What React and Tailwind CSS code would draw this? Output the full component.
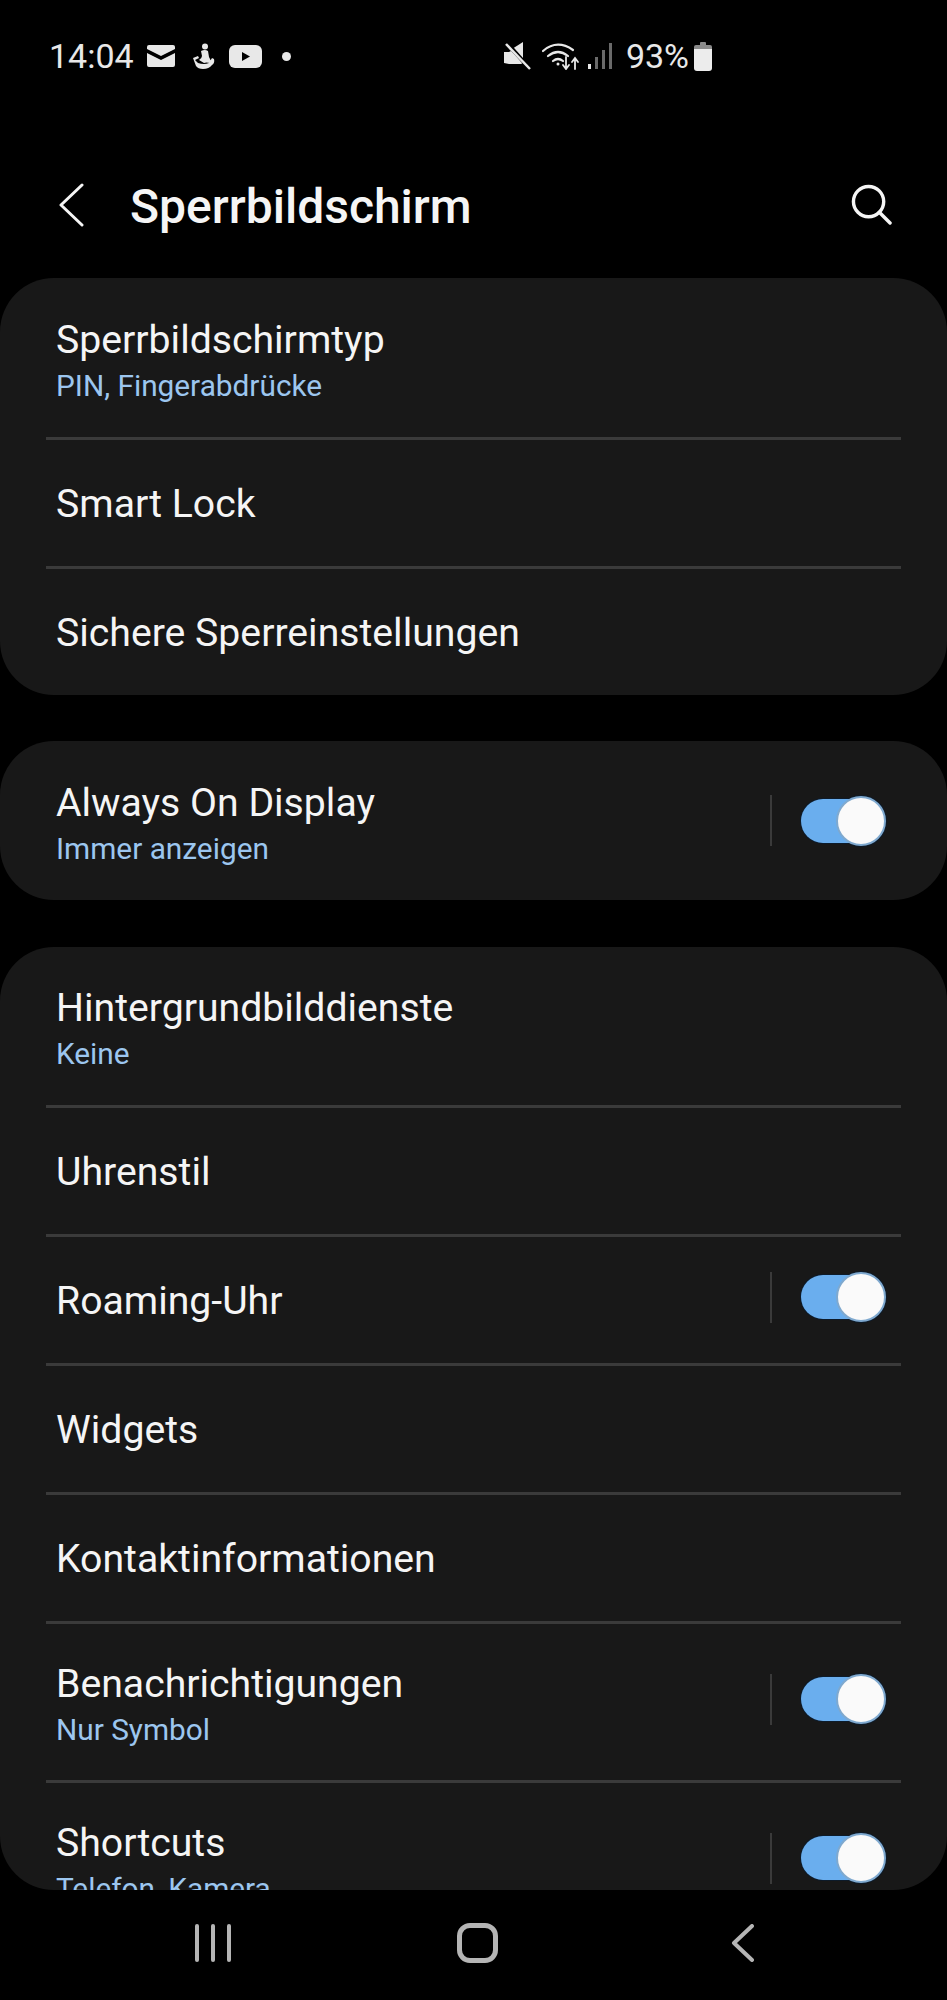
import React from 'react';

const Mail = () => (
  <svg width="28" height="22" viewBox="0 0 28 22">
    <path d="M0 2q0-2 2-2h24q2 0 2 2v2L14 11 0 4z" fill="#e8e8e8" />
    <path d="M0 8l14 7 14-7v12q0 2-2 2H2q-2 0-2-2z" fill="#e8e8e8" />
  </svg>
);

const Figure = () => (
  <svg width="24" height="26" viewBox="0 0 24 26" fill="#e8e8e8">
    <circle cx="13" cy="3.5" r="3" />
    <path d="M9 8q4-2 7 0l1 6q1 3 3 4l-2 2q-4-1-6 0l-5-3q3-2 3-4z" />
    <path d="M1 15l5-2 1 2-4 2 3 3q6 2 11 0l3-5 2 1q1 4-2 6-3 4-9 4-5 0-7-3z" />
  </svg>
);

const Youtube = () => (
  <svg width="33" height="23" viewBox="0 0 33 23">
    <rect width="33" height="23" rx="6" fill="#e8e8e8" />
    <path d="M13 7l8 4.500-8 4.500z" fill="#000" />
  </svg>
);

const Mute = () => (
  <svg width="27" height="28" viewBox="0 0 27 28">
    <path d="M0 10h5l2-1 12 12-2 1H5l-5-1z" fill="#e8e8e8" />
    <path d="M8 7l11-7v19z" fill="#e8e8e8" />
    <path d="M3 1l23 26" stroke="#000" strokeWidth="4" />
    <path d="M2 2l24 25" stroke="#e8e8e8" strokeWidth="2.500" />
  </svg>
);

const Wifi = () => (
  <svg width="37" height="28" viewBox="0 0 37 28" fill="none" stroke="#e8e8e8" strokeWidth="2.200" strokeLinecap="round">
    <path d="M1 9Q15-3 31 8" />
    <path d="M6 14q10-8 20 0" />
    <path d="M11 19q5-4 10 0" />
    <circle cx="16" cy="22" r="1.500" fill="#e8e8e8" stroke="none" />
    <path d="M24 15v11m-3-3l3 4 3-4" strokeWidth="1.800" />
    <path d="M33 27V17m-3 3l3-4 3 4" strokeWidth="1.800" />
  </svg>
);

const Signal = () => (
  <svg width="24" height="26" viewBox="0 0 24 26">
    <rect x="0" y="21" width="3" height="5" fill="#e8e8e8" />
    <rect x="7" y="14" width="3" height="12" fill="#6a6a6a" />
    <rect x="14" y="7" width="3" height="19" fill="#6a6a6a" />
    <rect x="21" y="0" width="3" height="26" fill="#6a6a6a" />
  </svg>
);

const Battery = () => (
  <svg width="18" height="29" viewBox="0 0 18 29">
    <path d="M6 1q0-1 1-1h4q1 0 1 1v2H6z" fill="#8a8a8a" />
    <rect y="3" width="18" height="7" rx="2" fill="#8a8a8a" />
    <path d="M0 7h18v19q0 3-3 3H3q-3 0-3-3z" fill="#ececec" />
  </svg>
);

const Toggle = ({ raised }) => (
  <div className={`flex items-center ml-auto ${raised ? 'mb-[6px]' : ''}`}>
    <div className="w-[2px] h-[51px] bg-[#3a3a3a]" />
    <div className="relative w-[84px] h-[44px] ml-[29px]">
      {/* dark halo sits behind the track and thumb */}
      <div className="absolute top-[-4px] right-[-2px] w-[52px] h-[52px] rounded-full bg-[#0d1b2a]" />
      <div className="absolute inset-0 rounded-full bg-[#6aaeee] shadow-[0_0_0_1px_#0d1b2a]" />
      <div className="absolute top-[-3px] right-[-1px] w-[50px] h-[50px] rounded-full bg-[#fafafa] border-2 border-[#7fa9cf]" />
    </div>
  </div>
);

const Row = ({ title, sub, toggle, raised = true, height }) => (
  <div className={`flex items-center pl-[56px] pr-[62px] ${height}`}>
    <div className={`flex flex-col ${sub ? 'pt-[3px]' : 'pt-[2px]'}`}>
      <span className="text-[39.200px] leading-[50px] text-[#f5f5f5]">{title}</span>
      {sub && <span className="text-[29.800px] leading-[36px] text-[#9cc6ef] mt-[3px]">{sub}</span>}
    </div>
    {toggle && <Toggle raised={raised} />}
  </div>
);

const Divider = () => <div className="h-[3px] mx-[46px] bg-[#3a3a3a]" />;

export default function App() {
  return (
    <div className="w-[947px] h-[2000px] flex flex-col bg-black overflow-hidden font-['Roboto',sans-serif]">
      {/* status bar */}
      <div className="flex items-center h-[112px] pl-[49px] pr-[235px] justify-between">
        <div className="flex items-center">
          <span className="text-[34px] text-[#e8e8e8] leading-none">14:04</span>
          <div className="flex items-center ml-[13px] gap-[17px]">
            <Mail />
            <Figure />
            <div className="ml-[-4px]"><Youtube /></div>
            <div className="w-[9px] h-[9px] ml-[3px] rounded-full bg-[#e8e8e8]" />
          </div>
        </div>
        <div className="flex items-center">
          <Mute />
          <div className="ml-[11px]"><Wifi /></div>
          <div className="ml-[9px]"><Signal /></div>
          <span className="ml-[14px] text-[34px] text-[#e8e8e8] leading-none">93%</span>
          <div className="ml-[5px]"><Battery /></div>
        </div>
      </div>

      {/* header */}
      <div className="flex items-center h-[166px] pt-[20px] pl-[59px] pr-[55px]">
        <svg width="25" height="44" viewBox="0 0 25 44" fill="none" stroke="#f5f5f5" strokeWidth="3" strokeLinecap="round" strokeLinejoin="round">
          <path d="M23 2L2 22l21 20" />
        </svg>
        <span className="ml-[46px] mt-[3px] text-[48px] leading-[56px] font-medium text-[#f5f5f5]">Sperrbildschirm</span>
        <svg className="ml-auto mb-[2px]" width="41" height="41" viewBox="0 0 42 42" fill="none" stroke="#f5f5f5" strokeWidth="3.500" strokeLinecap="round">
          <circle cx="18" cy="18" r="15.500" />
          <path d="M29 29l11 11" />
        </svg>
      </div>

      {/* Sperrbildschirmtyp */}
      <div className="rounded-[54px] bg-[#181818]">
        <Row title="Sperrbildschirmtyp" sub="PIN, Fingerabdrücke" height="h-[159px]" />
        <Divider />
        <Row title="Smart Lock" height="h-[126px]" />
        <Divider />
        <Row title="Sichere Sperreinstellungen" height="h-[126px]" />
      </div>

      <div className="mt-[46px] rounded-[54px] bg-[#181818]">
        <Row title="Always On Display" sub="Immer anzeigen" toggle raised={false} height="h-[159px]" />
      </div>

      <div className="mt-[47px] h-[943px] overflow-hidden rounded-[54px] bg-[#181818]">
        <Row title="Hintergrundbilddienste" sub="Keine" height="h-[158px]" />
        <Divider />
        <Row title="Uhrenstil" height="h-[126px]" />
        <Divider />
        <Row title="Roaming-Uhr" toggle height="h-[126px]" />
        <Divider />
        <Row title="Widgets" height="h-[126px]" />
        <Divider />
        <Row title="Kontaktinformationen" height="h-[126px]" />
        <Divider />
        <Row title="Benachrichtigungen" sub="Nur Symbol" toggle height="h-[156px]" />
        <Divider />
        <Row title="Shortcuts" sub="Telefon, Kamera" toggle height="h-[156px]" />
      </div>

      {/* navigation bar */}
      <div className="flex items-center flex-1 pl-[195px] pb-[4px]">
        <div className="flex gap-[12px]">
          <div className="w-[4px] h-[38px] rounded-full bg-[#b5b5b5]" />
          <div className="w-[4px] h-[38px] rounded-full bg-[#b5b5b5]" />
          <div className="w-[4px] h-[38px] rounded-full bg-[#b5b5b5]" />
        </div>
        <div className="ml-[226px] w-[41px] h-[40px] rounded-[13px] border-[5px] border-[#b5b5b5]" />
        <svg className="ml-[233px]" width="23" height="38" viewBox="0 0 23 38" fill="none" stroke="#b5b5b5" strokeWidth="4" strokeLinecap="round" strokeLinejoin="round">
          <path d="M21 2L3 19l18 17" />
        </svg>
      </div>
    </div>
  );
}
